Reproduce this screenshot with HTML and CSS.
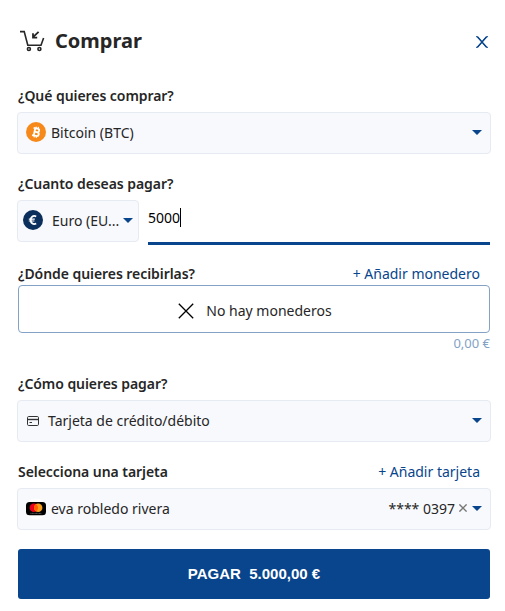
FILE: index.html
```
<!DOCTYPE html>
<html lang="es">
<head>
    <meta charset="UTF-8">
    <meta name="viewport" content="width=device-width, initial-scale=1.0">
    <title>Comprar</title>
    <link rel="stylesheet" href="styles.css">
</head>
<body>
    <!-- Cabecera -->
    <header class="header">
        <svg class="cart-icon" width="26" height="22" viewBox="0 0 26 22" fill="none" stroke="#262626" stroke-width="1.6">
            <path d="M0 1.6H4.2L7.8 15.2H21L23.6 8"/>
            <path d="M18.6 1.8L13 7.2M13 3.2V7.6H17.2" stroke-width="1.8"/>
            <circle cx="8.9" cy="19" r="1.5"/>
            <circle cx="19.4" cy="19" r="1.5"/>
        </svg>
        <h1 class="title">Comprar</h1>
        <svg class="close" width="12" height="12" viewBox="0 0 12 12" fill="none" stroke="#08458c" stroke-width="1.5">
            <path d="M0 .7H1.6L10.4 11.3H12M12 .7H10.4L1.6 11.3H0" stroke-width="1"/>
            <path d="M1.4 .7L10.6 11.3M10.6 .7L1.4 11.3"/>
        </svg>
    </header>

    <form class="form">
        <!-- Moneda a comprar -->
        <section class="field">
            <div class="label-row"><span class="label">¿Qué quieres comprar?</span></div>
            <div class="select">
                <svg class="coin" width="20" height="20" viewBox="0 0 20 20">
                    <circle cx="10" cy="9" r="10" fill="#f7891b"/>
                    <g transform="rotate(12 10 10)" fill="none" stroke="#fff" stroke-width="1.8">
                        <path d="M6.6 5.5H10.6C13.3 5.5 13.3 9 10.6 9H8.3M10.6 9C13.8 9 13.8 12.9 10.6 12.9H6.6M8.3 5.5V12.9"/>
                        <path d="M9 3.6V5.5M11.2 3.6V5.5M9 12.9V14.8M11.2 12.9V14.8" stroke-width="1.2"/>
                    </g>
                </svg>
                <span class="value">Bitcoin (BTC)</span>
                <span class="arrow"></span>
            </div>
        </section>

        <!-- Importe -->
        <section class="field">
            <div class="label-row"><span class="label">¿Cuanto deseas pagar?</span></div>
            <div class="amount-row">
                <div class="select select-currency">
                    <svg class="coin" width="20" height="20" viewBox="0 0 20 20" fill="none" stroke="#fff">
                        <circle cx="10" cy="9" r="10" fill="#0a2f5c" stroke="none"/>
                        <path d="M13.2 5.5C10.4 3.9 7.7 5.7 7.7 9S10.4 14.1 13.2 12.5" stroke-width="1.8"/>
                        <path d="M5.8 8.1H11.8M5.8 10H11.4" stroke-width="1.1"/>
                    </svg>
                    <span class="value">Euro (EU...</span>
                    <span class="arrow"></span>
                </div>
                <div class="amount"><span>5000</span><span class="caret"></span></div>
            </div>
        </section>

        <!-- Monedero de destino -->
        <section class="field field-wallet">
            <div class="label-row">
                <span class="label">¿Dónde quieres recibirlas?</span>
                <a class="add-link">+ Añadir monedero</a>
            </div>
            <div class="wallet">
                <svg width="16" height="16" viewBox="0 0 16 16" fill="none" stroke="#000" stroke-width="1.3">
                    <path d="M.8 .8L15.2 15.2M15.2 .8L.8 15.2"/>
                </svg>
                <span>No hay monederos</span>
            </div>
            <div class="balance">0,00 €</div>
        </section>

        <!-- Forma de pago -->
        <section class="field">
            <div class="label-row"><span class="label">¿Cómo quieres pagar?</span></div>
            <div class="select">
                <svg class="card-icon" width="12" height="10" viewBox="0 0 12 10" fill="none" stroke="#333">
                    <rect x=".5" y=".5" width="11" height="9" rx="1.2"/>
                    <path d="M.5 3.5H11.5" stroke-width="1.4"/>
                    <path d="M2.5 6.5H5"/>
                </svg>
                <span class="value">Tarjeta de crédito/débito</span>
                <span class="arrow"></span>
            </div>
        </section>

        <!-- Tarjeta -->
        <section class="field">
            <div class="label-row">
                <span class="label">Selecciona una tarjeta</span>
                <a class="add-link">+ Añadir tarjeta</a>
            </div>
            <div class="select">
                <svg class="coin" width="20" height="22" viewBox="0 0 20 22">
                    <circle cx="10" cy="11" r="10.5" fill="#fff"/>
                    <rect y="4" width="20" height="13.3" rx="3.5" fill="#000"/>
                    <circle cx="7.8" cy="9.8" r="4.2" fill="#eb001b"/>
                    <circle cx="12.2" cy="9.8" r="4.2" fill="#f79e1b"/>
                    <path d="M10 6.2A4.2 4.2 0 0 1 10 13.4A4.2 4.2 0 0 1 10 6.2" fill="#ff5f00"/>
                    <path d="M4.5 15.4H15.5" stroke="#777" stroke-width=".8" stroke-dasharray="1 .4"/>
                </svg>
                <span class="value">eva robledo rivera</span>
                <span class="card-number">**** 0397</span>
                <svg class="clear" width="8" height="8" viewBox="0 0 8 8" stroke="#777" stroke-width="1.4">
                    <path d="M.4 .4L7.6 7.6M7.6 .4L.4 7.6"/>
                </svg>
                <span class="arrow"></span>
            </div>
        </section>

        <button type="button" class="pay-button">PAGAR&nbsp; 5.000,00 €</button>
    </form>
</body>
</html>
```

FILE: styles.css
```
* {
    box-sizing: border-box;
}

body {
    font-family: "Noto Sans", "Open Sans", sans-serif;
    font-size: 14px;
    line-height: 20px;
    margin: 0;
    padding: 26px 14px 0 17px;
    background-color: #fff;
    color: #262626;
}

.header {
    display: flex;
    align-items: center;
    height: 30px;
    padding: 0 3px;
}

.cart-icon {
    margin-top: -1px;
}

.title {
    margin: 0 auto 0 9px;
    font-size: 20px;
    font-weight: 700;
    line-height: 30px;
}

.close {
    margin-top: 2px;
}

.form {
    padding-top: 30px;
}

.field {
    margin-bottom: 20px;
}

.label-row {
    display: flex;
    justify-content: space-between;
    height: 20px;
    margin-bottom: 6px;
    padding: 0 11px 0 1px;
}

.label {
    font-weight: 600;
    letter-spacing: -0.06px;
}

.add-link {
    color: #08458c;
}

.select {
    display: flex;
    align-items: center;
    height: 42px;
    padding: 0 8px;
    border: 1px solid #e6eaf2;
    border-radius: 4px;
    background-color: #f8f9fd;
}

.coin {
    margin-right: 5px;
    overflow: visible;
}

.card-icon {
    margin: 0 9px 0 1px;
}

.value {
    margin-right: auto;
}

/* Triángulo del desplegable */
.arrow {
    margin-top: -1px;
    border: 5px solid transparent;
    border-top-color: #08458c;
    border-bottom: 0;
}

.amount-row {
    display: flex;
    gap: 9px;
    padding-right: 1px;
}

.select-currency {
    width: 122px;
    padding: 0 5px;
}

.select-currency .coin {
    margin-right: 9px;
}

.amount {
    display: flex;
    flex: 1;
    height: 45px;
    margin-bottom: -3px;
    padding-top: 8px;
    border-bottom: 3px solid #08458c;
    color: #000;
}

.caret {
    width: 1px;
    height: 19px;
    background-color: #000;
}

.field-wallet {
    margin-top: 22px;
    margin-bottom: 21px;
    padding-right: 1px;
}

.field-wallet .label-row {
    margin-bottom: 1px;
    padding-right: 10px;
}

.wallet {
    display: flex;
    align-items: center;
    justify-content: center;
    gap: 12px;
    height: 48px;
    margin-left: 1px;
    border: 1px solid #83a2c6;
    border-radius: 4px;
    padding: 3px 0 0 2px;
}

.balance {
    text-align: right;
    font-size: 13px;
    color: #83a2c6;
}

.card-number {
    margin-right: 4px;
}

.clear {
    margin: -2px 5px 0 0;
}

.pay-button {
    display: block;
    width: 472px;
    height: 50px;
    margin: -1px 0 0 1px;
    padding: 0 0 2px;
    border: none;
    border-radius: 3px;
    background-color: #08458c;
    color: #fff;
    font-family: "Liberation Sans", Arial, sans-serif;
    font-size: 15px;
    font-weight: 700;
}
```
